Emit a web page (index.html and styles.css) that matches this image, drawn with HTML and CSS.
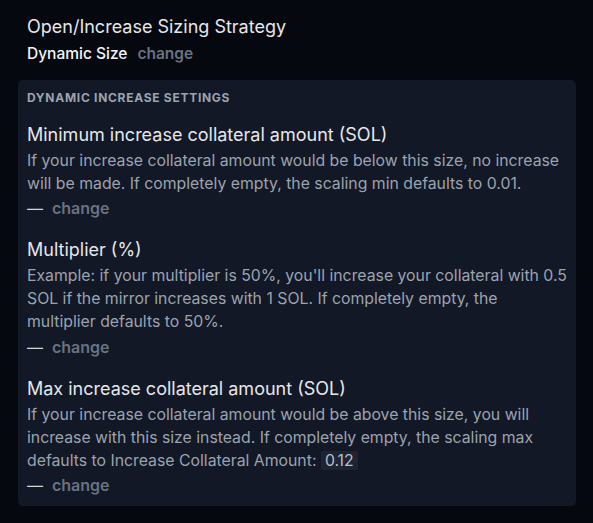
FILE: index.html
```html
<!DOCTYPE html>
<html>
<head>
<meta charset="utf-8">
<link rel="stylesheet" href="styles.css">
</head>
<body>
<div class="page">
  <div class="strategy">
    <div class="strategy-title">Open/Increase Sizing Strategy</div>
    <div class="strategy-value"><span class="value">Dynamic Size</span><span class="change">change</span></div>
  </div>
  <div class="card">
    <div class="card-header">Dynamic increase settings</div>
    <div class="setting">
      <div class="setting-title">Minimum increase collateral amount (SOL)</div>
      <div class="setting-desc">If your increase collateral amount would be below this size, no increase will be made. If completely empty, the scaling min defaults to 0.01.</div>
      <div class="setting-value"><span class="dash">—</span><span class="change">change</span></div>
    </div>
    <div class="setting">
      <div class="setting-title">Multiplier (%)</div>
      <div class="setting-desc">Example: if your multiplier is 50%, you'll increase your collateral with 0.5 SOL if the mirror increases with 1 SOL. If completely empty, the multiplier defaults to 50%.</div>
      <div class="setting-value"><span class="dash">—</span><span class="change">change</span></div>
    </div>
    <div class="setting">
      <div class="setting-title">Max increase collateral amount (SOL)</div>
      <div class="setting-desc">If your increase collateral amount would be above this size, you will increase with this size instead. If completely empty, the scaling max defaults to Increase Collateral Amount: <code class="code">0.12</code></div>
      <div class="setting-value"><span class="dash">—</span><span class="change">change</span></div>
    </div>
  </div>
</div>
</body>
</html>
```
FILE: styles.css
```css
* { box-sizing: border-box; }
html, body { margin: 0; padding: 0; }
body {
  background: #05080f;
  font-family: Inter, "Noto Sans", sans-serif;
  color: #e5e7eb;
  width: 593px;
  height: 523px;
  overflow: hidden;
}
.page {
  padding: 13px 17px 0 18px;
}
.strategy {
  padding: 0 9px;
}
.strategy-title {
  font-size: 18px;
  line-height: 28px;
  color: #e5e7eb;
}
.strategy-value {
  display: flex;
  align-items: baseline;
  gap: 10px;
  font-size: 15.5px;
  line-height: 24px;
  margin-top: 1px;
}
.value {
  font-weight: 500;
  color: #f3f4f6;
}
.change {
  font-weight: 600;
  color: #6b7280;
}
.card {
  margin-top: 14px;
  background: #121826;
  border-radius: 5px;
  padding: 10px 7px 10px 9px;
}
.card-header {
  font-size: 12px;
  line-height: 16px;
  font-weight: 700;
  text-transform: uppercase;
  color: #9ca3af;
  letter-spacing: 0.06em;
}
.setting {
  margin-top: 17px;
}
.card-header + .setting {
  margin-top: 14.5px;
}
.setting-title {
  font-size: 18px;
  line-height: 28px;
  color: #e5e7eb;
}
.setting-desc {
  font-size: 15.8px;
  line-height: 23px;
  color: #9ca3af;
}
.setting-value {
  display: flex;
  align-items: baseline;
  gap: 9px;
  margin-top: 2.5px;
  font-size: 16px;
  line-height: 22px;
}
.dash {
  color: #d1d5db;
}
.code {
  font-family: Inter, "Noto Sans", sans-serif;
  font-size: 15.8px;
  background: #1e2432;
  color: #b8bec9;
  padding: 0 4px;
  border-radius: 2px;
}
```
